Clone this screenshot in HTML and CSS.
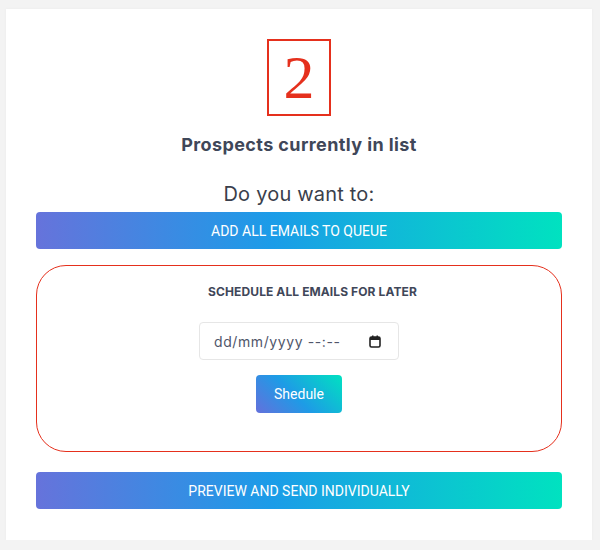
FILE: index.html
```html
<!DOCTYPE html>
<html>
  <head>
    <meta charset="utf-8">
    <link rel="stylesheet" href="styles.css">
  </head>
  <body>
    <div class="card">
      <div class="count">2</div>
      <h3 class="caption">Prospects currently in list</h3>
      <p class="question">Do you want to:</p>
      <button class="grad-btn wide">ADD ALL EMAILS TO QUEUE</button>

      <div class="schedule">
        <h4 class="schedule-title">SCHEDULE ALL EMAILS FOR LATER</h4>
        <div class="date-input">
          <span class="date-text">dd/mm/yyyy --:--</span>
          <svg class="cal" width="12" height="13" viewBox="0 0 12 13">
            <rect x="1" y="2" width="10" height="10" rx="1.5" fill="none" stroke="#222" stroke-width="1.6"/>
            <rect x="1" y="2" width="10" height="3" fill="#222"/>
            <rect x="3" y="0.5" width="1.5" height="2.5" fill="#222"/>
            <rect x="7.5" y="0.5" width="1.5" height="2.5" fill="#222"/>
          </svg>
        </div>
        <button class="grad-btn small">Shedule</button>
      </div>

      <button class="grad-btn wide">PREVIEW AND SEND INDIVIDUALLY</button>
    </div>
  </body>
</html>
```

FILE: styles.css
```css
html, body {
  margin: 0;
  padding: 0;
  background-color: #f3f3f3;
}
.card {
  box-sizing: border-box;
  width: 586px;
  height: 531px;
  margin: 9px 0 0 6px;
  padding: 30px 30px 0 30px;
  background: #fff;
  box-shadow: 0 0 3px rgba(0, 0, 0, 0.04);
  display: flex;
  flex-direction: column;
  align-items: center;
  font-family: "Inter", "Noto Sans", sans-serif;
  color: #3f4759;
}
.count {
  box-sizing: border-box;
  width: 64px;
  height: 77px;
  border: 2px solid #e5301d;
  color: #e5301d;
  font-family: "Liberation Serif", serif;
  font-size: 62px;
  line-height: 73px;
  text-align: center;
}
.caption {
  margin: 17px 0 0 0;
  font-size: 18px;
  font-weight: 700;
  letter-spacing: 0.4px;
  line-height: 24px;
}
.question {
  margin: 25px 0 0 0;
  font-size: 20px;
  font-weight: 400;
  letter-spacing: 0.2px;
  line-height: 24px;
  color: #3a3f4c;
}
.grad-btn {
  border: none;
  border-radius: 4px;
  color: #fff;
  font-family: "Roboto", sans-serif;
  font-size: 14px;
  cursor: pointer;
}
.wide {
  width: 100%;
  height: 37px;
  margin-top: 6px;
  background: linear-gradient(90deg, #6673db 0%, #1b9ce8 45%, #00e2c0 100%);
}
.small {
  width: 86px;
  height: 38px;
  margin-top: 15px;
  font-size: 14px;
  background: linear-gradient(45deg, #6470dc 0%, #1e9be6 45%, #00e1c1 100%);
}
.schedule {
  box-sizing: border-box;
  width: 100%;
  height: 187px;
  margin: 16px 0 20px 0;
  border: 1px solid #e5301d;
  border-radius: 30px;
  display: flex;
  flex-direction: column;
  align-items: center;
  padding-top: 18px;
}
.schedule-title {
  margin: 0;
  padding-left: 27px;
  font-size: 12px;
  font-weight: 700;
  letter-spacing: 0.1px;
  line-height: 16px;
}
.date-input {
  box-sizing: border-box;
  width: 200px;
  height: 38px;
  margin-top: 22px;
  border: 1px solid #e6e6e6;
  border-radius: 4px;
  display: flex;
  align-items: center;
  justify-content: space-between;
  padding: 0 17px 0 14px;
  font-size: 14px;
  letter-spacing: 0.6px;
  color: #50566a;
}
.schedule + .grad-btn {
  margin-top: 0;
}
```
